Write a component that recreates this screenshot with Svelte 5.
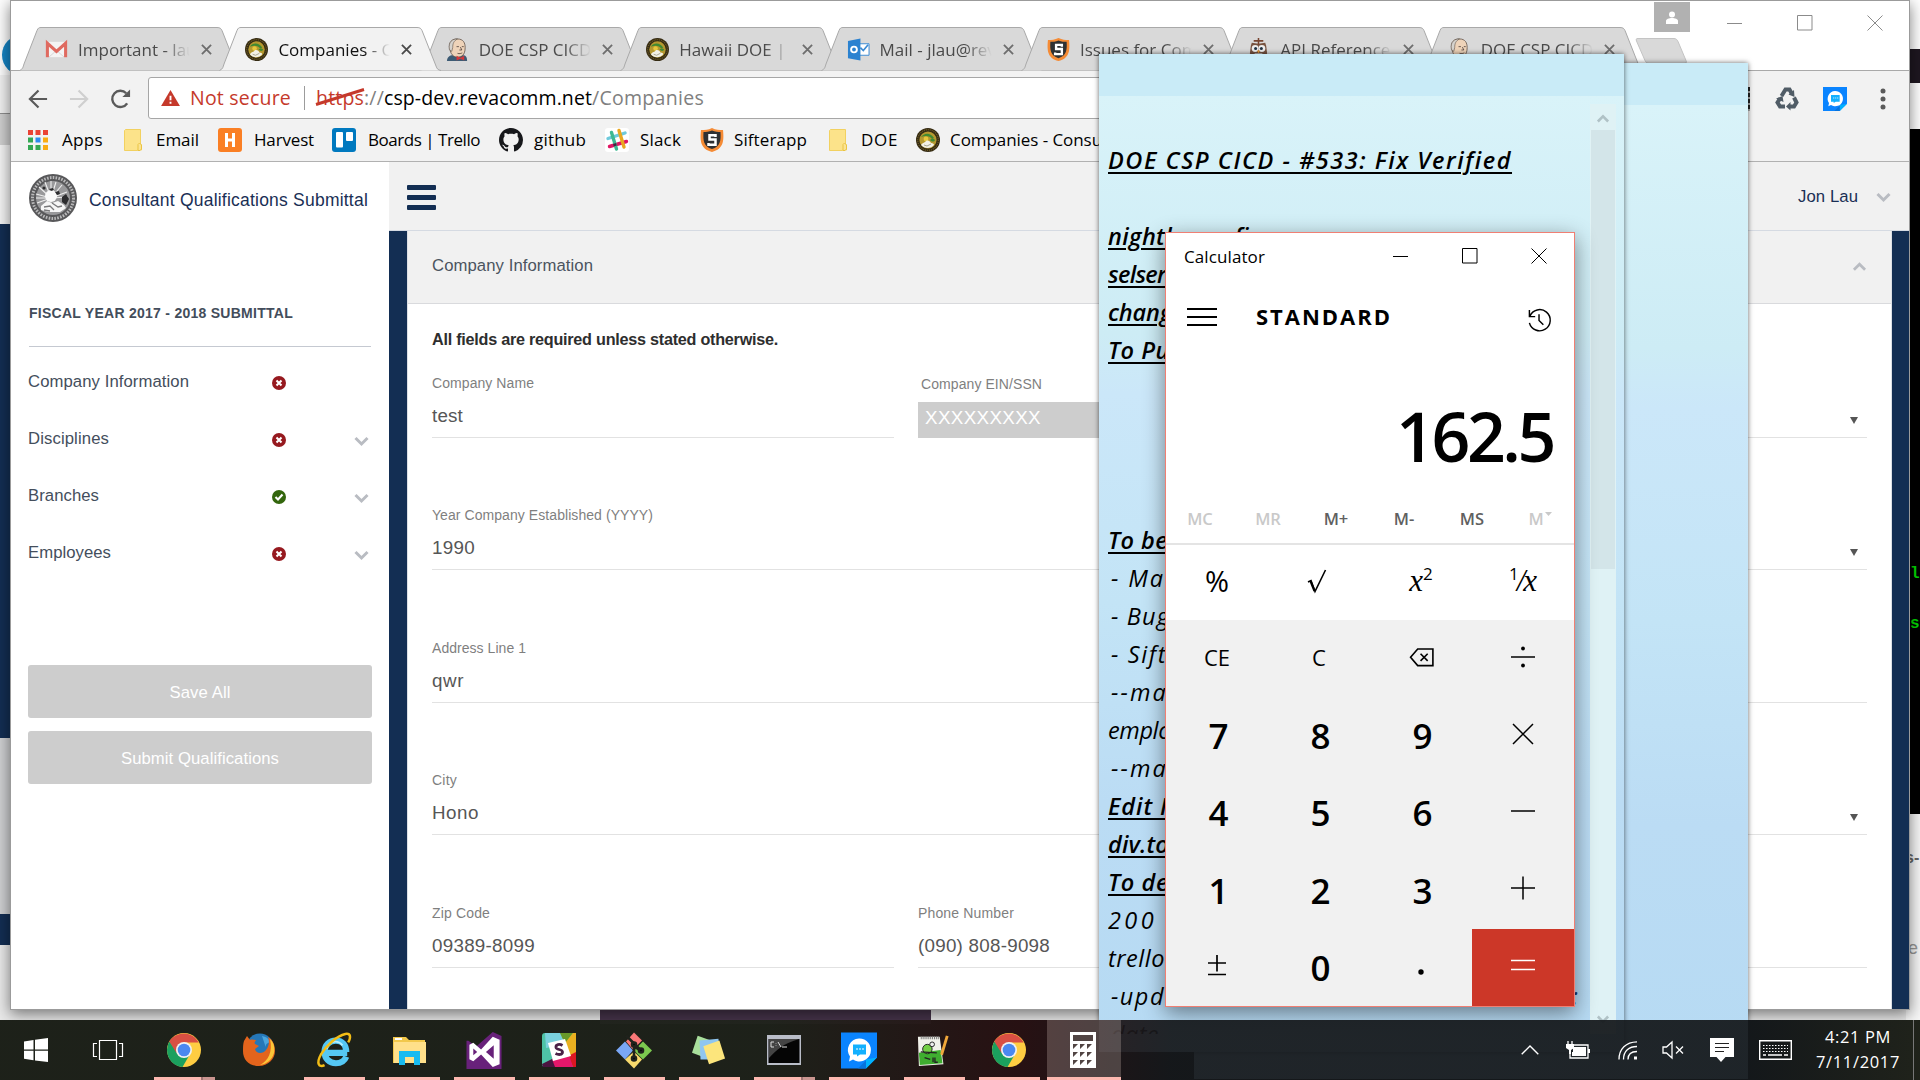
<script>
  // Spreads or tightens the letters of a label so that it fills a given width.
  function fit(node, width) {
    const apply = () => {
      node.style.letterSpacing = '0px';
      const natural = node.getBoundingClientRect().width;
      node.style.letterSpacing = (width - natural) / node.textContent.length + 'px';
    };
    apply();
    document.fonts?.ready.then(apply);
  }

  const tabs = [
    { icon: 'gmail', title: 'Important - lauj' },
    { icon: 'seal', title: 'Companies - Co', active: true },
    { icon: 'jenkins', title: 'DOE CSP CICD' },
    { icon: 'seal', title: 'Hawaii DOE | C' },
    { icon: 'outlook', title: 'Mail - jlau@rev' },
    { icon: 'sifter', title: 'Issues for Com' },
    { icon: 'owl', title: 'API Reference' },
    { icon: 'jenkins', title: 'DOE CSP CICD' }
  ];

  const bookmarks = [
    { icon: 'apps', iw: 20, label: 'Apps', w: 41, gap: 14, after: 21 },
    { icon: 'folder', iw: 18, label: 'Email', w: 43, gap: 14, after: 19 },
    { icon: 'harvest', iw: 24, label: 'Harvest', w: 60, gap: 12, after: 18 },
    { icon: 'trello', iw: 24, label: 'Boards | Trello', w: 112, gap: 12, after: 19 },
    { icon: 'github', iw: 24, label: 'github', w: 52, gap: 11, after: 19 },
    { icon: 'slack', iw: 24, label: 'Slack', w: 41, gap: 11, after: 19 },
    { icon: 'sifter', iw: 24, label: 'Sifterapp', w: 73, gap: 10, after: 22 },
    { icon: 'folder', iw: 18, label: 'DOE', w: 37, gap: 14, after: 18 },
    { icon: 'seal', iw: 24, label: 'Companies - Consu', w: 152, gap: 10, after: 0 }
  ];

  const nav = [
    { label: 'Company Information', w: 161, ok: false, more: false },
    { label: 'Disciplines', w: 81, ok: false, more: true },
    { label: 'Branches', w: 71, ok: true, more: true },
    { label: 'Employees', w: 83, ok: false, more: true }
  ];

  const rows = [
    { label: 'Company Name', lw: 102, value: 'test', w: 31, kind: 'ein', select: true },
    { label: 'Year Company Established (YYYY)', lw: 221, value: '1990', w: 43, kind: 'wide', select: true },
    { label: 'Address Line 1', lw: 94, value: 'qwr', w: 32, kind: 'wide' },
    { label: 'City', lw: 25, value: 'Hono', w: 47, kind: 'wide', select: true },
    { label: 'Zip Code', lw: 58, value: '09389-8099', w: 103, kind: 'phone' }
  ];

  const note = [
    { t: 'DOE CSP CICD - #533: Fix Verified', w: 404, h: true },
    { t: '' },
    { t: 'nightl', w: 64, h: true, far: 'fi' },
    { t: 'selser', w: 58, h: true },
    { t: 'chang', w: 64, h: true },
    { t: 'To Pu', w: 62, h: true },
    { t: '' }, { t: '' }, { t: '' }, { t: '' },
    { t: 'To be', w: 60, h: true },
    { t: '- Ma', w: 54, i: true },
    { t: '- Bug', w: 59, i: true },
    { t: '- Sift', w: 56, i: true },
    { t: '--ma', w: 57, i: true },
    { t: 'emplo', w: 63 },
    { t: '--ma', w: 57, i: true },
    { t: 'Edit I', w: 60, h: true },
    { t: 'div.to', w: 61, h: true },
    { t: 'To de', w: 61, h: true },
    { t: '200', w: 49 },
    { t: 'trello', w: 57 },
    { t: '-upd', w: 54, i: true, tail: ':' },
    { t: 'date', w: 48, i: true }
  ];

  const memory = ['MC', 'MR', 'M+', 'M-', 'MS', 'M'];
  const keys = ['CE', 'C', 'back', 'div', '7', '8', '9', 'mul', '4', '5', '6', 'sub', '1', '2', '3', 'add', 'pm', '0', 'dot', 'eq'];
  const apps = [
    { icon: 'chrome', open: true, multi: true }, { icon: 'firefox' }, { icon: 'ie', open: true },
    { icon: 'explorer', open: true }, { icon: 'vs', open: true }, { icon: 'slackapp', open: true },
    { icon: 'git', open: true }, { icon: 'stickies', open: true }, { icon: 'cmd', open: true, multi: true },
    { icon: 'chat', open: true }, { icon: 'npp', open: true }, { icon: 'chrome', open: true },
    { icon: 'calc', open: true, active: true }
  ];
</script>

{#snippet icon(name)}
  {#if name === 'gmail'}
    <svg class="ic" viewBox="0 0 24 24"><rect x="1" y="4" width="22" height="16" fill="#f4f4f4"/><path d="M4 20 12 13l8 7" fill="none" stroke="#d5d5d5"/><path d="M2.500 20V5.500L12 14l9.500-8.500V20" fill="none" stroke="#df6a60" stroke-width="3.200"/></svg>
  {:else if name === 'seal'}
    <svg class="ic" viewBox="0 0 24 24"><circle cx="12" cy="12" r="12" fill="#352b13"/><circle cx="12" cy="12" r="10.300" fill="none" stroke="#6f5c25" stroke-width="1.300" stroke-dasharray="1 1"/><circle cx="12" cy="12" r="8.600" fill="#b5982f"/><path d="M5 9c3-4 9-5 13 1l-2 1c-2-3-6-4-11-2Z" fill="#3f8a32"/><circle cx="10" cy="11" r="2.400" fill="#e8c93c"/><path d="M14 12c2-2 4-1 5 0-1 2-3 2-5 0Z" fill="#3f8a32"/><path d="M5 17c2-3 4-2 5-4 2-1 4 0 5 2 2 0 3 1 3 2-3 4-10 4-13 0Z" fill="#f3f1e6"/><path d="m8 17 3 1 4-2" fill="none" stroke="#a8a58f"/></svg>
  {:else if name === 'sealbw'}
    <svg class="ic" viewBox="0 0 48 48"><circle cx="24" cy="24" r="24" fill="#58585a"/><circle cx="24" cy="24" r="20.500" fill="none" stroke="#b9b9ba" stroke-width="3" stroke-dasharray="1.600 1.300"/><circle cx="24" cy="24" r="17" fill="#99999b"/><g stroke="#efefef" stroke-width="1.100"><path d="M22 24V7m0 17-6-16m6 16L10 13m12 11L7 20m15 4 5-16m-5 16L33 11M22 24l16-6M22 24l17-1M22 24H7m15 0L8 29"/></g><circle cx="22" cy="22" r="6" fill="#fafafa"/><g fill="#2c2c2e"><circle cx="15" cy="14" r="1.600"/><path d="m20 15 4-1 1 2-3 1Zm6 3 4-1 1 3-3 1ZM33 23l4-3 3 5-3 6-4-3Z"/></g><path d="m12 32 6-5 5 2 6-2 6 4 2 3-6 4H19l-7-2Z" fill="#f6f6f6"/><path d="m15 33 6-1 4 4m-2-7 6 4 4-1m-18 4 6 1" fill="none" stroke="#79797b" stroke-width="1.300"/></svg>
  {:else if name === 'jenkins'}
    <svg class="ic" viewBox="0 0 24 24"><path d="M1 24c0-4 3-6 6-6h10c4 0 5 2 5 6Z" fill="#3d5b74"/><path d="M4 12C2 4 7 1 12 1c6 0 8 4 8 9 0 8-4 10-8 10-5 0-7-4-8-8Z" fill="#eed3b9" stroke="#5b4c42" stroke-width=".8"/><path d="M3.500 12C2 4 7 .5 12 1 8 3 7 6 7 10l-1 4Z" fill="#d5d2cd" stroke="#5b4c42" stroke-width=".6"/><path d="M11 9h2.500m3 0h2M15 9.500l1.500 3H14m-2 3.500c2 .8 4 0 5-.5" fill="none" stroke="#453a35" stroke-width=".8"/><path d="m11 18.500 4 2 4-2v5l-4-1.800-4 1.800Z" fill="#d4373b"/></svg>
  {:else if name === 'outlook'}
    <svg class="ic" viewBox="0 0 24 24"><path d="M13 6h10v12H13Z" fill="#fff" stroke="#3b8ad3"/><path d="m14 10 3 3 5-6" fill="none" stroke="#3b8ad3" stroke-width="1.700"/><path d="M1 3 14 .5v23L1 21Z" fill="#2b82d0"/><circle cx="7.300" cy="12" r="3" fill="none" stroke="#fff" stroke-width="2"/></svg>
  {:else if name === 'sifter'}
    <svg class="ic" viewBox="0 0 24 24"><path d="M12 0c4 2 7 2 11 2 1 10 1 19-11 22C0 21 0 12 1 2c4 0 7 0 11-2Z" fill="#f58b35"/><path d="M12 2.500c3 1.300 6 1.500 8.500 1.500.5 8.500 0 14.500-8.500 17C3.500 18.500 3 12.500 3.500 4 6 4 9 3.800 12 2.500Z" fill="#2e3033"/><path d="M15.500 9V7.200h-6v4.300h6v5.300h-7V15" fill="none" stroke="#fff" stroke-width="2.500"/></svg>
  {:else if name === 'owl'}
    <svg class="ic" viewBox="0 0 24 24"><path d="M4 8 5 5l7 1 7-1 1 3 1 8-3 8H6l-3-8Z" fill="#775340"/><path d="M12 0v7M7 3h10" stroke="#77442f" stroke-width="1.600"/><circle cx="8.500" cy="11" r="3.600" fill="#eee"/><circle cx="15.500" cy="11" r="3.600" fill="#eee"/><circle cx="9" cy="11" r="1.600" fill="#234"/><circle cx="15" cy="11" r="1.600" fill="#234"/><path d="m10.500 13 1.500 3 1.500-3Z" fill="#f0a030"/><path d="M8 16h8v7H8Z" fill="#ddd"/></svg>
  {:else if name === 'apps'}
    <svg class="ic" viewBox="0 0 20 20"><path d="M0 0h5v5H0zM7.500 0h5v5h-5zM15 0h5v5h-5z" fill="#ea4335"/><path d="M0 7.500h5v5H0zM0 15h5v5H0zM7.500 15h5v5h-5z" fill="#34a853"/><path d="M7.500 7.500h5v5h-5z" fill="#2d8cf0"/><path d="M15 7.500h5v5h-5zM15 15h5v5h-5z" fill="#f9ab13"/></svg>
  {:else if name === 'folder'}
    <svg class="ic" viewBox="0 0 18 22"><path d="M.5 1.500 1.500.5h15v14.500l1 1V21H14l-1 .5H.5Z" fill="#fce38a" stroke="#f2d160"/><path d="M14 21.500v-6l1.500-1.500 2 2V20l-1.500 1.500Z" fill="#fbe392" stroke="#eac443"/></svg>
  {:else if name === 'harvest'}
    <svg class="ic" viewBox="0 0 24 24"><rect width="24" height="24" rx="3" fill="#fa7f24"/><path d="M8.500 5v14M15.500 5v14M8 12h7" stroke="#fff" stroke-width="3"/></svg>
  {:else if name === 'trello'}
    <svg class="ic" viewBox="0 0 24 24"><rect width="24" height="24" rx="3" fill="#0079bf"/><rect x="4" y="4" width="7" height="15.500" rx="1" fill="#fff"/><rect x="14" y="4" width="7" height="9" rx="1" fill="#fff"/></svg>
  {:else if name === 'github'}
    <svg class="ic" viewBox="0 0 16 16"><path fill="#17181b" d="M8 0C3.580 0 0 3.580 0 8c0 3.540 2.290 6.530 5.470 7.590.4.070.55-.17.55-.38 0-.19-.01-.82-.01-1.490-2.010.37-2.530-.49-2.690-.94-.09-.23-.48-.94-.82-1.130-.28-.15-.68-.52-.01-.53.63-.01 1.080.58 1.230.82.72 1.210 1.870.87 2.330.66.070-.52.28-.87.51-1.070-1.780-.2-3.640-.89-3.640-3.950 0-.87.31-1.590.82-2.150-.08-.2-.36-1.020.08-2.120 0 0 .67-.21 2.200.82.64-.18 1.320-.27 2-.27s1.360.09 2 .27c1.530-1.040 2.200-.82 2.200-.82.44 1.100.16 1.920.08 2.120.51.56.82 1.270.82 2.150 0 3.070-1.870 3.750-3.650 3.950.29.25.54.73.54 1.480 0 1.070-.01 1.930-.01 2.200 0 .21.15.46.55.38A8.010 8.010 0 0 0 16 8c0-4.420-3.580-8-8-8Z"/></svg>
  {:else if name === 'slack'}
    <svg class="ic" viewBox="0 0 24 24"><rect width="24" height="24" rx="3" fill="#fff"/><g stroke-width="3.400" stroke-linecap="round"><path d="M3 10.500 20 5" stroke="#6ecadc"/><path d="m4.500 18.500 17-5" stroke="#e01563"/><path d="m6.500 4.500 5 16.500" stroke="#3eb991"/><path d="m14 2.500 5 16.500" stroke="#e9a820"/></g><path d="m8 16 3-1 .8 2.500-3 1Z" fill="#512043"/></svg>
  {:else if name === 'chat'}
    <svg class="ic" viewBox="0 0 36 36"><path d="M0 0h36v25L25 36H0Z" fill="#0a84ff"/><path d="M36 25 25 36v-9Z" fill="#00b2ff"/><path d="m17 36 8-8v8Z" fill="#0673dd"/><path d="M18 6a11.500 11.500 0 1 1-6 21l-4 2 1-5A11.500 11.500 0 0 1 18 6Z" fill="#fff"/><path d="M12 12h13v10h-6l-3 2v-2h-4Z" fill="#12b0ff"/><path d="M15 16.500h2m1 0h2m1 0h2" stroke="#fff"/></svg>
  {:else if name === 'chrome'}
    <svg class="ic" viewBox="0 0 34 34"><circle cx="17" cy="17" r="17" fill="#ffcd42"/><path d="M17 17 2.300 8.500A17 17 0 0 0 15.500 34l7-12Z" fill="#1ba05e"/><path d="M2.300 8.500A17 17 0 0 1 31.700 9.500H17L9.500 20Z" fill="#d94f43"/><circle cx="17" cy="17" r="8" fill="#f1f1f1"/><circle cx="17" cy="17" r="6.300" fill="#4a88f0"/></svg>
  {:else if name === 'firefox'}
    <svg class="ic" viewBox="0 0 34 34"><circle cx="18" cy="14" r="13.500" fill="#2577b8"/><path d="M20 3c5 1 8 4 9 7-4-1-6 2-5 5" fill="#4ba6de"/><path d="M2 8c1-2 2-3 3-5l3 4c2-1 4 0 6 0-1 2-2 3-1 4l4 2-4 3c1 5 8 5 11 1 4-5 3-10 2-13 5 3 7 8 7 14 0 8-7 15-16 15C7 33 1 27 1 18c0-4 0-7 1-10Z" fill="#e3641c"/><path d="M28 6c4 4 5 8 4 14-2 7-7 11-14 12 8-4 13-13 10-26Z" fill="#fbc638"/></svg>
  {:else if name === 'ie'}
    <svg class="ic" viewBox="0 0 36 36"><path d="M10 21h22M31 25c-2 5-6 7-11 7-7 0-12-5-12-12S13 8 20 8s11 5 11 12" fill="none" stroke="#55c8f4" stroke-width="6.500"/><path d="M10 17c2-9 12-10 17-4" fill="none" stroke="#baf0ff" stroke-width="2"/><path d="M8 34c-6 3-9-2-4-11C10 13 21 3 30 1c6-1 6 4 3 9" fill="none" stroke="#f2bd16" stroke-width="2.600"/></svg>
  {:else if name === 'explorer'}
    <svg class="ic" viewBox="0 0 34 34"><path d="M1 4h13l3 3h16v23H1Z" fill="#f2c84c"/><path d="M2 9h32v21H2Z" fill="#ffe08a"/><path d="M3 6h7" stroke="#fff" stroke-width="2"/><path d="M7 32V18h21v14h-6v-8h-9v8Z" fill="#18bbf0"/></svg>
  {:else if name === 'vs'}
    <svg class="ic" viewBox="0 0 36 38"><path d="M0 9h2l8 6L27 0l9 4v34H0Z" fill="#68217a"/><path d="m3 13 4-2 8 7L27 5l7 3v25l-7 3-12-13-8 7-4-2Zm4 4v7l4-3.500Zm13 3.500 8 7v-14Z" fill="#fff" fill-rule="evenodd"/></svg>
  {:else if name === 'slackapp'}
    <svg class="ic" viewBox="0 0 34 34"><rect width="34" height="34" rx="3" fill="#4ec3a7"/><path d="M3 0h17l4 11L4 15Z" fill="#79d0dd"/><path d="M18 0h13L23 11Z" fill="#689929"/><path d="M31 0h3v20l-7 3-4-13Z" fill="#eab020"/><path d="M34 19v15h-3l-5-11Z" fill="#dc1722"/><path d="M10 26l17-4 4 12H12Z" fill="#e5176a"/><path d="M0 31l10-5 3 8H1Z" fill="#4a1440"/><path d="m6 10 17-4 6 17-18 5Z" fill="#fff"/><path d="M20.500 12.500c-3-2-7-1-6.500 2 .5 2.500 6.500 1.500 6.500 4.500 0 3-4 3-7 1.500" fill="none" stroke="#4a2148" stroke-width="2.800"/></svg>
  {:else if name === 'git'}
    <svg class="ic" viewBox="0 0 36 36"><path d="m18 0 8 8-9 9-7-8Z" fill="#f97878"/><path d="m27 9 9 9-9 9-9-9Z" fill="#7cc94f"/><path d="m9 9 8 9-8 9-9-9Z" fill="#7aa7f5"/><path d="m18 19 8 8-8 9-9-9Z" fill="#f8da6d"/><g stroke="#1f221c" stroke-width="2.600"><path d="m10 3 15 15M18 12v14m0-12 9 5" fill="none"/><circle cx="18" cy="12" r="2"/><circle cx="18" cy="26" r="2"/><circle cx="25" cy="18" r="2"/></g></svg>
  {:else if name === 'stickies'}
    <svg class="ic" viewBox="0 0 36 36"><path d="m6 3 20 7-7 18-19-7Z" fill="#a9df9c"/><path d="m8 8 20-2 2 22H9Z" fill="#8fc6f0"/><path d="m12 14 17-6 6 19-17 6Z" fill="#fce57c"/></svg>
  {:else if name === 'cmd'}
    <svg class="ic" viewBox="0 0 34 30"><rect width="34" height="30" fill="#b9bdc8"/><rect x="1.500" y="4" width="31" height="24" fill="#050505"/><path d="M2 4h30C15 9 10 15 2 23Z" fill="#444"/><path d="M7 7H4v5h3m2-4v.5m0 2v.5m2-4 3 5m1 0h5" fill="none" stroke="#ddd"/></svg>
  {:else if name === 'npp'}
    <svg class="ic" viewBox="0 0 34 36"><path d="M0 4h23l4 29-26 2Z" fill="#f1f1ea"/><path d="m1 21 23-3 2 14-24 2Z" fill="#3fae30"/><path d="M3 5h20" stroke="#777" stroke-width="3" stroke-dasharray="1 1"/><circle cx="10" cy="17" r="5" fill="#73cf45" stroke="#222"/><circle cx="15" cy="12" r="2.500" fill="#eee" stroke="#222"/><path d="m3 20 17 1M7 26l6 2m3-2v5m2-5v5h3" stroke="#222" stroke-width="1.400" fill="none"/><path d="m31 3-6 20" stroke="#f1a83b" stroke-width="3"/></svg>
  {:else if name === 'calc'}
    <svg class="ic" viewBox="0 0 26 36"><path d="M0 0h26v36H0Z" fill="#fff"/><path d="M3 3h20v6H3ZM3 12h5l-5 5Zm7 0h5l-5 5Zm7 0h5l-5 5ZM3 20h5l-5 5Zm7 0h5l-5 5Zm7 0h5l-5 5ZM3 28h5l-5 5Zm7 0h5l-5 5Zm7 0h5l-5 5Z" fill="#514443"/></svg>
  {/if}
{/snippet}

{#snippet chevron(up)}
  <svg class="chev" class:up viewBox="0 0 14 9"><path d="m1 1 6 6 6-6" fill="none" stroke="currentColor" stroke-width="3"/></svg>
{/snippet}

<div class="desktop">
  <div class="behind left">
    <div class="l1"><i></i></div><div class="l2"></div><div class="l3"></div><div class="l4"></div>
    <div class="navy l5"></div><div class="l6"></div><div class="navy l7"></div>
  </div>
  <div class="behind right">
    <div class="r1"></div><div class="r2"></div><div class="r3"></div>
    <div class="r4"><span>l</span><span>s</span></div>
    <div class="r5"><b>s-</b><span>e</span></div>
  </div>
  <div class="purple"></div>

  <section class="browser">
    <div class="tabstrip">
      <div class="tabs">
        {#each tabs as tab}
          <div class="tab" class:active={tab.active}>
            <svg class="shape" viewBox="0 0 222 44" preserveAspectRatio="none"><path d="M.5 43.500C4 42 4 40 5 37L18 3.500C19 1 20 .5 22 .5H198c3 0 4 1 5 3L217 39c1 3 2 4 5 4.500" fill={tab.active ? '#f2f2f2' : '#d9d9d9'} stroke="#a9a9a9"/></svg>
            <span class="fav">{@render icon(tab.icon)}</span>
            <span class="tabtitle">{tab.title}</span>
            <svg class="x" viewBox="0 0 12 12"><path d="m1 1 10 10M11 1 1 11" stroke={tab.active ? '#4b4b4b' : '#6e6e6e'} stroke-width="2"/></svg>
          </div>
        {/each}
        <svg class="newtab" viewBox="0 0 53 26"><path d="M3 .5h36c2 0 3 1 4 3l8 19c1 2 0 3-2 3H14c-2 0-3-1-4-3L1.500 3C1 1 1 .5 3 .5Z" fill="#d9d9d9" stroke="#c4c4c4"/></svg>
      </div>
      <div class="wbtns">
        <span class="person"><svg viewBox="0 0 12 13"><circle cx="6" cy="3.500" r="3" fill="#fff"/><path d="M0 13V10c0-2 3-3 6-3s6 1 6 3v3Z" fill="#fff"/></svg></span>
        <svg viewBox="0 0 16 16"><path d="M0 8.500h15" stroke="#8b8b8b"/></svg>
        <svg viewBox="0 0 16 16"><path d="M.5.500h14.500v14.500H.5Z" fill="none" stroke="#8b8b8b"/></svg>
        <svg viewBox="0 0 16 16"><path d="m.5.500 15 15m0-15-15 15" stroke="#8b8b8b"/></svg>
      </div>
    </div>
    <div class="toolbar">
      <svg class="nv" viewBox="0 0 22 20"><path d="M20 10H2m9-9-9 9 9 9" fill="none" stroke="#5a5a5a" stroke-width="2.300"/></svg>
      <svg class="nv" viewBox="0 0 22 20"><path d="M1 10h18m-9-9 9 9-9 9" fill="none" stroke="#cfcfcf" stroke-width="2.300"/></svg>
      <svg class="nv" viewBox="0 0 22 20"><path d="M18 14.500A8.500 8.500 0 1 1 17 4" fill="none" stroke="#5a5a5a" stroke-width="2.500"/><path d="M21 0v8h-8Z" fill="#5a5a5a"/></svg>
      <div class="omni">
        <svg class="warn" viewBox="0 0 20 17"><path d="M10 0 20 17H0Z" fill="#c5392b"/><path d="M10 6v5m0 1.500v2" stroke="#fff" stroke-width="2"/></svg>
        <span class="ns" use:fit={101}>Not secure</span><i class="bar"></i>
        <span class="url"><span class="https"><span use:fit={48}>https</span><svg viewBox="0 0 48 18"><path d="M0 16.500 48 1.500" stroke="#c5392b" stroke-width="3"/></svg></span><span class="dim" use:fit={20}>://</span><span use:fit={208}>csp-dev.revacomm.net</span><span class="dim" use:fit={112}>/Companies</span></span>
      </div>
      <div class="ext">
        <i class="film"></i>
        <svg class="rec" viewBox="0 0 24 24"><g fill="none" stroke="#505c66" stroke-width="4"><path d="m6.500 9 4-6.500h4L17 7"/><path d="m19 10.500 2.500 5-2.500 4h-5"/><path d="M10 19.500H5l-2.500-4 2.500-4"/></g><path d="m19 3 .5 7-6-2.500ZM15.500 15v8.500L11 19.500ZM1 11.500 7.500 9l1 6Z" fill="#505c66"/></svg>
        <span class="blue">{@render icon('chat')}</span>
        <svg class="dots" viewBox="0 0 6 22"><circle cx="3" cy="3" r="2.500"/><circle cx="3" cy="11" r="2.500"/><circle cx="3" cy="19" r="2.500"/></svg>
      </div>
    </div>
    <div class="bookmarks">
      {#each bookmarks as b}
        <span class="bi" style:width="{b.iw}px" style:margin-right="{b.gap}px">{@render icon(b.icon)}</span>
        <span class="bl" style:width="{b.w}px" style:margin-right="{b.after}px"><span use:fit={b.w}>{b.label}</span></span>
      {/each}
    </div>

    <div class="page">
      <aside>
        <div class="brand"><span class="logo">{@render icon('sealbw')}</span><span use:fit={279}>Consultant Qualifications Submittal</span></div>
        <h2><span use:fit={264}>FISCAL YEAR 2017 - 2018 SUBMITTAL</span></h2>
        <nav>
          {#each nav as n}
            <div class="item">
              <span class="nl"><span use:fit={n.w}>{n.label}</span></span>
              <svg class="st" viewBox="0 0 14 14"><circle cx="7" cy="7" r="7" fill={n.ok ? '#33660d' : '#96191f'}/><path d={n.ok ? 'm3.500 7 2.500 2.500 4.500-5' : 'm4.500 4.500 5 5m0-5-5 5'} fill="none" stroke="#fff" stroke-width="2.100"/></svg>
              {#if n.more}{@render chevron(false)}{/if}
            </div>
          {/each}
        </nav>
        <button><span use:fit={61}>Save All</span></button>
        <button><span use:fit={158}>Submit Qualifications</span></button>
      </aside>
      <main>
        <header>
          <div class="burger"><i></i><i></i><i></i></div>
          <div class="user"><span use:fit={60}>Jon Lau</span>{@render chevron(false)}</div>
        </header>
        <div class="frame">
          <div class="panel">
            <div class="phead"><span use:fit={161}>Company Information</span>{@render chevron(true)}</div>
            <div class="pbody">
              <p><b use:fit={346}>All fields are required unless stated otherwise.</b></p>
              {#each rows as r}
                <div class="row {r.kind}">
                  <div class="field"><label><span use:fit={r.lw}>{r.label}</span></label><div class="val"><span use:fit={r.w}>{r.value}</span></div></div>
                  {#if r.kind === 'ein'}
                    <div class="field ein"><label><span use:fit={121}>Company EIN/SSN</span></label><div class="val"><span use:fit={116}>XXXXXXXXX</span></div></div>
                  {:else if r.kind === 'phone'}
                    <div class="field"><label><span use:fit={96}>Phone Number</span></label><div class="val"><span use:fit={132}>(090) 808-9098</span></div></div>
                  {/if}
                  <div class="field last"><div class="val">{#if r.select}<i class="tri"></i>{/if}</div></div>
                </div>
              {/each}
            </div>
          </div>
        </div>
      </main>
    </div>
  </section>

  <section class="note back"><div class="nh"></div></section>
  <section class="note front">
    <div class="nh"></div>
    <div class="nb">
      <div class="lines">
        {#each note as l}
          <div class="line" class:h={l.h} class:ind={l.i}>{#if l.t}<span use:fit={l.w}>{l.t}</span>{/if}{#if l.far}<strong>{l.far}</strong>{/if}{#if l.tail}<em>{l.tail}</em>{/if}</div>
        {/each}
      </div>
      <div class="scroll">
        <div class="sa">{@render chevron(true)}</div><div class="thumb"></div><div class="sd">{@render chevron(false)}</div>
      </div>
    </div>
  </section>

  <section class="calc">
    <div class="ct"><span use:fit={81}>Calculator</span>
      <svg viewBox="0 0 16 16"><path d="M0 8.500h15" stroke="#000"/></svg>
      <svg viewBox="0 0 16 16"><path d="M.5.500h14.500v14.500H.5Z" fill="none" stroke="#000"/></svg>
      <svg viewBox="0 0 16 16"><path d="m.5.500 15 15m0-15-15 15" stroke="#000"/></svg>
    </div>
    <div class="cm"><div class="cb"><i></i><i></i><i></i></div><b use:fit={136}>STANDARD</b>
      <svg viewBox="0 0 26 26"><path d="M2.500 3v7h6M3 9.500a11 11 0 1 1-.5 7" fill="none" stroke="#000" stroke-width="1.500"/><path d="M12.500 7.500V14l4.500 4.500" fill="none" stroke="#000" stroke-width="1.500"/></svg>
    </div>
    <div class="disp"><span use:fit={157}>162.5</span></div>
    <div class="mem">{#each memory as m, i}<span class:off={i < 2 || i === 5}>{m}{#if i === 5}<svg viewBox="0 0 7 4"><path d="M0 0h7L3.500 4Z" fill="#c9c9c9"/></svg>{/if}</span>{/each}</div>
    <div class="fn"><span class="pct">%</span><span class="root"><svg viewBox="0 0 20 24"><path d="m1 13 3-1.500L8 22.500 18.500 1" fill="none" stroke="#000" stroke-width="1.600"/><path d="m3.500 12 4 10" stroke="#000" stroke-width="2.200"/></svg></span><span class="m">x<sup>2</sup></span><span class="m inv"><sup>1</sup><u>/</u>x</span></div>
    <div class="keys">
      {#each keys as k}
        <div class="key" class:num={/^\d$/.test(k)} class:eq={k === 'eq'}>
          {#if k === 'back'}<svg class="bk" viewBox="0 0 26 20"><path d="M9 1h16v17.500H9L1.500 9.750Z" fill="none" stroke="#000" stroke-width="1.700"/><path d="m12 6 7.500 7.500m0-7.500L12 13.500" stroke="#000" stroke-width="1.700"/></svg>
          {:else if k === 'div'}<svg viewBox="0 0 24 24"><path d="M0 12h24" stroke="#000" stroke-width="1.500"/><circle cx="12" cy="3.500" r="1.900"/><circle cx="12" cy="20.500" r="1.900"/></svg>
          {:else if k === 'mul'}<svg viewBox="0 0 24 24"><path d="m2 2 20 20m0-20L2 22" stroke="#000" stroke-width="1.500"/></svg>
          {:else if k === 'sub'}<svg viewBox="0 0 24 24"><path d="M0 12h24" stroke="#000" stroke-width="1.500"/></svg>
          {:else if k === 'add'}<svg viewBox="0 0 24 24"><path d="M0 12h24M12 .5v23" stroke="#000" stroke-width="1.500"/></svg>
          {:else if k === 'pm'}<svg viewBox="0 0 24 24"><path d="M3 10h18M12 2v16.500M3 21.500h18" stroke="#000" stroke-width="1.700"/></svg>
          {:else if k === 'dot'}<svg viewBox="0 0 24 24"><circle cx="12" cy="19" r="2.700"/></svg>
          {:else if k === 'eq'}<svg viewBox="0 0 24 24"><path d="M0 7.500h24M0 16.500h24" stroke="#fff" stroke-width="1.700"/></svg>
          {:else}{k}{/if}
        </div>
      {/each}
    </div>
  </section>

  <footer>
    <div class="sys"><svg class="win" viewBox="0 0 24 24"><path d="M0 3.500 9.500 2v9.500H0Zm11-1.700L24 0v11.500H11ZM0 12.800h9.500v9.400L0 20.800Zm11 0h13V24l-13-1.600Z" fill="#fff"/></svg></div>
    <div class="sys"><svg class="tv" viewBox="0 0 30 20"><path d="M6.500.500h17v19h-17ZM4 3.500H.5v13H4M26 3.500h3.500v13H26" fill="none" stroke="#fff" stroke-width="1.200"/></svg></div>
    <div class="appsbar">
      {#each apps as a}
        <div class="app {a.icon}" class:open={a.open} class:multi={a.multi} class:cur={a.active}>{@render icon(a.icon)}</div>
      {/each}
    </div>
    <div class="tray">
      <svg class="t1" viewBox="0 0 18 10"><path d="m.7 9.300 8.300-8.300 8.300 8.300" fill="none" stroke="#fff" stroke-width="1.400"/></svg>
      <svg class="t2" viewBox="0 0 24 18"><path d="M5 4h17v13H4v-5" fill="none" stroke="#fff" stroke-width="1.300"/><path d="M7 6h13v9H6v-4h1ZM22 8h2v4h-2ZM0 3h8v4l-3 2v4H3V9L0 7Z" fill="#fff"/><path d="M2 0v3m4-3v3" stroke="#fff" stroke-width="1.300"/></svg>
      <svg class="t3" viewBox="0 0 20 19"><g fill="none" stroke="#fff" stroke-width="1.300"><path d="M1 18.500C1 8 8 1 19 .8"/><path d="M5.500 18.500C5.500 10 11 5.500 19 5.500"/><path d="M10 18.500c0-5 3-8 9-8"/></g><path d="M16 15.500h3v3h-3Z" fill="#fff"/></svg>
      <svg class="t4" viewBox="0 0 22 18"><path d="M1 6h3.500L10 1v16l-5.500-5H1ZM14 5.500l7 7m0-7-7 7" fill="none" stroke="#fff" stroke-width="1.300"/></svg>
      <svg class="t5" viewBox="0 0 24 24"><path d="M0 0h24v19h-8.500L11 24l-4.500-5H0Z" fill="#fff"/><path d="M5 5.500h14M5 9.500h14M5 13.500h9" stroke="#222" stroke-width="1.200"/></svg>
      <svg class="t6" viewBox="0 0 33 20"><path d="M.7.700h31.600v18.600H.7Z" fill="none" stroke="#fff" stroke-width="1.400"/><path d="M4 5.500h25M4 8.500h25M4 11.500h25" stroke="#fff" stroke-width="1.200" stroke-dasharray="1.500 1.500"/><path d="M4 15h3m2 0h14m2 0h4" stroke="#fff" stroke-width="1.300"/></svg>
      <div class="clock"><span use:fit={66}>4:21 PM</span><span use:fit={84}>7/11/2017</span></div>
      <i class="peek"></i>
    </div>
  </footer>
</div>

<style>
  :global(body) { margin: 0; background: #000; overflow: hidden; }
  * { box-sizing: border-box; }
  .desktop { position: relative; width: 1920px; height: 1080px; overflow: hidden; background: linear-gradient(#e9e9e9 0 1020px, #000 1020px); font-family: "Open Sans", "Noto Sans", sans-serif; color: #000; }
  svg { display: block; overflow: visible; flex: none; }
  .ic { width: 100%; height: 100%; }
  span, b { white-space: pre; }
  .behind { position: absolute; top: 0; height: 1020px; }
  .left { left: 0; width: 12px; overflow: hidden; }
  .left div { width: 12px; }
  .l1 { height: 75px; background: #fdfdfd; overflow: hidden; }
  .l1 i { display: block; width: 40px; height: 40px; border-radius: 50%; background: #1584c4; margin: 35px 0 0 2px; }
  .l2 { height: 38px; background: #f1f1f1; }
  .l3 { height: 32px; background: #cfcfcf; border-top: 1px solid #8e8e8e; }
  .l4 { height: 79px; background: #f4f4f4; }
  .navy { background: #132e53; }
  .l5 { height: 514px; }
  .l6 { height: 176px; background: #cfd0d2; }
  .l7 { height: 31px; }
  .right { left: 1906px; width: 14px; overflow: hidden; background: #fff; }
  .r1 { height: 49px; }
  .r2 { height: 34px; background: #1e1720; }
  .r3 { height: 46px; }
  .r4 { height: 685px; background: #000; color: #00d800; font: bold 16px/50px "Liberation Mono", monospace; padding: 420px 0 0 4px; display: flex; flex-direction: column; }
  .r5 { height: 206px; background: #f7f7f7; color: #666; font: 18px/91px "Liberation Sans", sans-serif; display: flex; flex-direction: column; }
  .r5 span { color: #999; padding-left: 2px; }
  .r5 b { margin-left: -1px; margin-top: -2px; font-size: 16px; }
  .purple { position: absolute; left: 600px; top: 1000px; width: 331px; height: 24px; background: #46344a; }

  .browser { position: absolute; left: 10px; top: 0; width: 1900px; height: 1010px; border: 1px solid #9b9b9b; background: #fff; box-shadow: 0 4px 14px rgba(0, 0, 0, .5); display: flex; flex-direction: column; overflow: hidden; }
  .tabstrip { height: 70px; border-bottom: 1px solid #a9a9a9; display: flex; flex: none; }
  .tabs { display: flex; padding: 26px 0 0 8px; flex: 1 1 0; min-width: 0; }
  .tab { position: relative; width: 200.400px; flex: none; height: 44px; display: flex; align-items: center; padding-left: 26px; color: #4a4a4a; }
  .tab.active { z-index: 1; color: #111; }
  .shape { position: absolute; left: 0; top: 0; width: 222px; height: 44px; }
  .fav { position: relative; width: 23px; height: 23px; margin-right: 10px; flex: none; }
  .tabtitle { position: relative; width: 114px; overflow: hidden; font-size: 17px; line-height: 26px; margin-top: 1px; -webkit-mask-image: linear-gradient(90deg, #000 75%, transparent 98%); mask-image: linear-gradient(90deg, #000 75%, transparent 98%); }
  .x { position: relative; width: 11px; height: 11px; margin-left: 9px; }
  .newtab { width: 53px; height: 26px; margin: 11px 0 0 13px; }
  .wbtns { display: flex; padding: 14px 26px 0 0; flex: none; }
  .wbtns svg { width: 16px; height: 16px; margin-left: 54px; }
  .wbtns > svg:nth-child(2) { margin-left: 37px; }
  .person { width: 36px; height: 30px; background: #b1b1b1; margin-top: -13px; display: flex; align-items: center; justify-content: center; }
  .wbtns .person svg { width: 12px; height: 13px; margin: 0; }
  .toolbar { height: 55px; background: #f2f2f2; display: flex; align-items: center; padding: 0 23px 0 17px; flex: none; }
  .nv { width: 21px; height: 20px; margin-right: 20px; flex: none; }
  .omni { height: 42px; width: 1560px; margin: 0 0 1px -5px; border: 1px solid #a6a6a6; border-radius: 3px; background: #fff; display: flex; align-items: center; padding: 0 0 1px 12px; font-size: 19.500px; }
  .nv:nth-child(3) { margin-right: 22px; }
  .warn { width: 19px; height: 16px; margin-right: 10px; }
  .ns { color: #c5392b; }
  .bar { width: 1px; height: 24px; background: #9c9c9c; margin: 0 11px 0 13px; }
  .url { display: flex; }
  .https { position: relative; color: #c5392b; }
  .https svg { position: absolute; left: 0; top: 4px; width: 48px; height: 18px; }
  .dim { color: #808080; }
  .ext { display: flex; align-items: center; margin-left: auto; }
  .film { width: 8px; height: 24px; background: repeating-linear-gradient(#222 0 4px, #aaa 4px 6px); margin-right: 25px; }
  .rec { width: 24px; height: 24px; margin-right: 24px; }
  .blue { width: 24px; height: 24px; margin-right: 33px; }
  .dots { width: 6px; height: 22px; fill: #5a5a5a; }
  .bookmarks { height: 36px; background: #f2f2f2; border-bottom: 1px solid #b1b1b1; display: flex; align-items: center; padding: 0 0 7px 17px; font-size: 17px; line-height: 24px; flex: none; }
  .bi { height: 24px; flex: none; display: flex; align-items: center; }
  .bl { flex: none; }
  .bi :global(svg) { height: auto; }

  .page { flex: 1; display: flex; font-family: "Liberation Sans", Arial, sans-serif; min-height: 0; }
  aside { width: 378px; padding: 12px 17px; display: flex; flex-direction: column; background: #fff; color: #444e5c; font-size: 16.700px; flex: none; }
  .brand { display: flex; align-items: center; gap: 12px; height: 48px; font-size: 17.500px; color: #1a2f55; }
  .brand > span:last-child { margin-top: 4px; }
  .logo { width: 48px; height: 48px; margin-left: 1px; }
  h2 { margin: 81px 1px 0; font-size: 14px; line-height: 20px; height: 44px; border-bottom: 1px solid #c5c9d1; color: #434d5b; }
  nav { display: flex; flex-direction: column; padding-top: 6px; margin-bottom: 84px; }
  .item { height: 57px; display: flex; align-items: center; }
  .nl { width: 244px; }
  .st { width: 14px; height: 14px; margin: 3px 68px 0 0; }
  .chev { width: 15px; height: 9px; color: #b9bcc2; }
  .item .chev, .item :global(.chev) { margin-top: 6px; }
  .up { transform: rotate(180deg); }
  button { height: 53px; margin: 0 0 13px; border: 0; border-radius: 3px; background: #cdcdcd; color: #fff; font: 16.700px "Liberation Sans", sans-serif; width: 344px; padding: 2px 0 0; flex: none; }
  main { flex: 1; display: flex; flex-direction: column; background: #f1f1f1; }
  header { height: 69px; border-bottom: 1px solid #d5dae2; display: flex; justify-content: space-between; padding: 22px 18px 0 18px; flex: none; }
  .burger { width: 29px; display: flex; flex-direction: column; gap: 5px; margin-top: 1px; }
  .burger i { height: 5px; background: #132e53; border-radius: 1px; }
  .user { display: flex; align-items: center; gap: 18px; height: 26px; font-size: 16.700px; color: #1a2f55; }
  .frame { flex: 1; background: #132e53; padding: 0 17px 0 18px; display: flex; }
  .panel { flex: 1; background: #fff; border: solid #dcdfe4; border-width: 0 1px; display: flex; flex-direction: column; }
  .phead { height: 73px; background: #f1f1f1; border-bottom: 1px solid #d9dadd; display: flex; justify-content: space-between; align-items: center; padding: 0 25px 2px 24px; font-size: 16.700px; color: #4b545f; flex: none; }
  .phead :global(.chev) { width: 13px; }
  .pbody { padding: 0 24px; }
  p { margin: 0; height: 65px; padding-top: 23px; font-size: 16.200px; line-height: 24px; color: #2e2e2e; }
  .row { height: 132.400px; display: grid; grid-template-columns: 1110px 1fr; column-gap: 24px; }
  .row.ein, .row.phone { grid-template-columns: 462px 624px 1fr; }
  .row.ein { align-items: start; }
  .field { display: flex; flex-direction: column; }
  label { height: 32px; line-height: 24px; font-size: 14px; color: #7f7f7f; padding-top: 2px; display: block; }
  .val { height: 37px; border-bottom: 1px solid #e2e2e2; font-size: 18.800px; line-height: 30px; color: #565656; }
  .ein.field label { padding-left: 3px; padding-top: 3px; }
  .ein.field .val { background: #cdcdcd; color: #fff; border: 0; padding-left: 7px; height: 36px; margin-top: 1px; line-height: 31px; }
  .last .val { height: 69px; display: flex; justify-content: flex-end; align-items: flex-end; padding: 0 9px 13px 0; }
  .tri { border: solid transparent; border-width: 7px 4.500px 0; border-top-color: #555; }

  .note { position: absolute; background: linear-gradient(#d9f3f9 42px, #cdecf5 28%, #cbe7f9 34%, #c3e4f6 55%, #bbdcf4 75%, #b6daf3); box-shadow: 0 0 5px rgba(0, 0, 0, .6); display: flex; flex-direction: column; }
  .nh { height: 42px; background: #c9ebf7; flex: none; }
  .back { left: 1194px; top: 63px; width: 554px; height: 1016px; }
  .front { left: 1099px; top: 54px; width: 525px; height: 998px; }
  .nb { flex: 1; display: flex; justify-content: space-between; padding: 8px 8px 18px 9px; overflow: hidden; }
  .lines { width: 478px; padding-top: 37px; height: 930px; overflow: hidden; font: italic 23.500px/38px "Open Sans", sans-serif; }
  .line { height: 38px; display: flex; white-space: pre; }
  .line.h { font-weight: 600; }
  .line.h span { text-decoration: underline; text-decoration-thickness: 1.500px; text-underline-offset: 3px; }
  .ind { padding-left: 3px; }
  .line em { margin-left: 407px; color: #17396b; }
  .line strong { margin-left: 62px; font-weight: 600; }
  .scroll { width: 26px; background: #dff2f5; height: 930px; display: flex; flex-direction: column; }
  .sa { height: 26px; display: flex; align-items: center; justify-content: center; padding-top: 3px; }
  .scroll :global(.chev) { width: 12px; color: #b0c2c6; }
  .thumb { height: 439px; background: #d3e5e9; border: 1px solid #e0f2f5; border-width: 0 1px; }
  .sd { margin-top: auto; height: 19px; display: flex; justify-content: center; }

  .calc { position: absolute; left: 1165px; top: 232px; width: 410px; height: 775px; border: 1px solid #f07f73; background: #fff; box-shadow: 0 6px 20px rgba(0, 0, 0, .45); display: flex; flex-direction: column; }
  .ct { height: 46px; display: flex; align-items: center; padding-left: 18px; font-size: 17px; }
  .ct svg { width: 16px; height: 16px; margin-left: 53px; }
  .ct svg:nth-of-type(1) { margin-left: 128px; }
  .cm { height: 78px; display: flex; align-items: center; padding: 0 22px 4px 21px; font-size: 22px; }
  .cb { display: flex; flex-direction: column; gap: 6px; width: 30px; margin: 2px 39px 0 0; }
  .cb i { height: 2px; background: #000; }
  .cm svg { width: 25px; height: 25px; margin: 7px 0 0 auto; }
  .disp { height: 146px; text-align: right; padding: 29px 21px 0 0; font-size: 68px; line-height: 100px; font-weight: 600; }
  .mem { height: 42px; display: grid; grid-template-columns: repeat(6, 1fr); border-bottom: 2px solid #e4e4e4; text-align: center; font-size: 16.500px; line-height: 31px; font-weight: 600; color: #606060; }
  .mem .off { color: #c9c9c9; }
  .mem svg { display: inline-block; width: 7px; height: 4px; vertical-align: 9px; margin-left: 1px; }
  .fn { height: 75px; display: grid; grid-template-columns: repeat(4, 1fr); align-items: center; justify-items: center; font-size: 29px; line-height: 40px; padding-bottom: 3px; }
  .root svg { width: 20px; height: 24px; }
  .root { margin-right: 4px; }
  .m { font: italic 31px/40px "Liberation Serif", serif; }
  .m sup { font: 17px/1 "Open Sans", sans-serif; vertical-align: 11px; }
  .m u { text-decoration: none; margin: 0 -2px; }
  .keys { flex: 1; background: #f1f1f1; display: grid; grid-template-columns: repeat(4, 1fr); grid-template-rows: repeat(5, 1fr); }
  .key { display: flex; align-items: center; justify-content: center; font-size: 22px; padding-bottom: 4px; }
  .key.num { font-size: 35px; font-weight: 600; padding: 0 0 0 3px; }
  .key svg { width: 24px; height: 24px; }
  .key .bk { width: 25px; height: 19px; margin-top: 2px; }
  .key.eq { background: #cc3728; }

  footer { position: absolute; left: 0; top: 1020px; width: 1920px; height: 60px; display: flex; background: linear-gradient(90deg, rgba(31, 35, 27, .94) 0 40%, rgba(36, 26, 24, .94) 47%, rgba(42, 18, 20, .94) 53%, rgba(22, 25, 28, .94) 61%, rgba(21, 25, 28, .94) 91%, rgba(33, 36, 28, .96)); }
  .sys { width: 72px; display: flex; align-items: center; justify-content: center; }
  .win { width: 24px; height: 24px; }
  .tv { width: 30px; height: 20px; }
  .appsbar { display: flex; padding-left: 3px; }
  .app { width: 75px; height: 60px; display: flex; align-items: center; justify-content: center; position: relative; padding-right: 2px; }
  .app > :global(svg) { width: 34px; height: 34px; }
  .app.vs > :global(svg), .app.chat > :global(svg), .app.git > :global(svg) { width: 36px; height: 37px; }
  .app.calc > :global(svg) { width: 26px; height: 36px; }
  .open::after { content: ""; position: absolute; left: 7px; right: 7px; bottom: 0; height: 3px; background: #fdb8b0; }
  .multi::after { background: linear-gradient(90deg, #fdb8b0 47px, #a07472 47px 49px, #ca9590 49px); }
  .cur { width: 74px; }
  .app.calc { position: relative; left: 0; top: 0; height: 60px; border: 0; box-shadow: none; flex-direction: row; background: rgba(255, 230, 225, .22); }
  .cur::after { left: 0; right: 0; }
  .tray { display: flex; align-items: center; margin-left: auto; }
  .t1 { width: 18px; height: 10px; margin-right: 27px; }
  .t2 { width: 24px; height: 18px; margin-right: 28px; }
  .t3 { width: 20px; height: 19px; margin-right: 24px; }
  .t4 { width: 22px; height: 18px; margin-right: 26px; }
  .t5 { width: 24px; height: 24px; margin-right: 25px; }
  .t6 { width: 33px; height: 20px; }
  .clock { width: 121px; display: flex; flex-direction: column; align-items: flex-end; color: #fff; font-size: 16.500px; line-height: 25px; padding: 0 13px 2px 0; }
  .clock span:first-child { margin-right: 9px; }
  .peek { width: 1px; height: 60px; background: #777; margin-right: 6px; }
</style>
